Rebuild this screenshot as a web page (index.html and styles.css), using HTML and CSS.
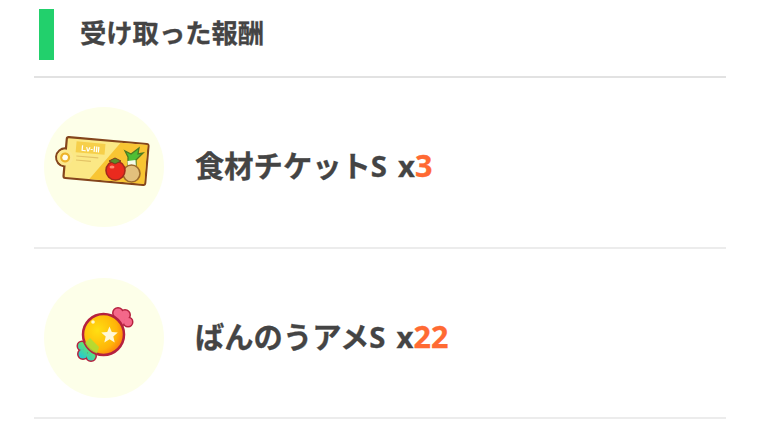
FILE: index.html
```html
<!DOCTYPE html>
<html lang="ja">
<head>
  <meta charset="UTF-8">
  <title>受け取った報酬</title>
  <link rel="stylesheet" href="styles.css">
</head>
<body>
  <div class="title">
    <div class="title-bar"></div>
    <h2>受け取った報酬</h2>
  </div>

  <div class="reward">
    <div class="icon">
      <svg width="120" height="120" viewBox="0 0 120 120">
        <g transform="translate(62 54) rotate(5)">
          <circle cx="-41" cy="0" r="9" fill="#fbe88e" stroke="#84451c" stroke-width="2.2"/>
          <rect x="-41" y="-20.5" width="82" height="41" rx="2" fill="#fbe885" stroke="#84451c" stroke-width="2.2"/>
          <path d="M13 -19.5H40V19.500H-15Z" fill="#f8c533"/>
          <circle cx="-41" cy="0" r="8" fill="#fbe88e"/>
          <circle cx="-41" cy="0" r="5" fill="#edb32a"/>
          <circle cx="-41" cy="0" r="2.8" fill="#fffdf0"/>
          <rect x="-31" y="-17" width="29" height="11" fill="#f6cf4a"/>
          <text class="ticket-label" x="-16.5" y="-8">Lv-III</text>
          <rect x="-30" y="-3" width="22" height="1.2" fill="#e3c265"/>
          <rect x="-30" y="1" width="15" height="1.2" fill="#e3c265"/>
        </g>
        <path d="M84 58 L84 50 L81 44 L87 47 L95 41 L94 47 L99 46 L92 53 L92 60Z" fill="#4fbe35" stroke="#4d7a22" stroke-width="1.3"/>
        <path d="M83.500 54 L91.500 53 L92 61 L84 61Z" fill="#f6fcea"/>
        <circle cx="87.500" cy="66.500" r="8.500" fill="#e3c07c" stroke="#9c6a2c" stroke-width="1.6"/>
        <circle cx="71.500" cy="63.500" r="9.500" fill="#ea2a1e" stroke="#a32a1c" stroke-width="1.6"/>
        <path d="M65 54 L71 51 L77 54 L71 57Z" fill="#5a8f2a" stroke="#7a3a1c" stroke-width="1"/>
        <ellipse cx="68" cy="60" rx="2.500" ry="1.500" fill="#ff8a70"/>
      </svg>
    </div>
    <div class="name">食材チケットS <span class="times">x</span><span class="count">3</span></div>
  </div>

  <div class="reward">
    <div class="icon">
      <svg width="120" height="120" viewBox="0 0 120 120">
        <defs>
          <radialGradient id="candyBody" cx="0.35" cy="0.4" r="0.8">
            <stop offset="0" stop-color="#ffdf12"/>
            <stop offset="0.6" stop-color="#ffb508"/>
            <stop offset="1" stop-color="#fa5a14"/>
          </radialGradient>
          <linearGradient id="candyTail" gradientUnits="userSpaceOnUse" x1="36" y1="80" x2="50" y2="64">
            <stop offset="0" stop-color="#1fc8d8"/>
            <stop offset="1" stop-color="#86f03c"/>
          </linearGradient>
        </defs>
        <g fill="#b5213f" stroke="#b5213f" stroke-width="3">
          <circle cx="74" cy="35" r="4.500"/>
          <circle cx="81" cy="37" r="4.500"/>
          <circle cx="84" cy="44" r="4"/>
          <circle cx="75" cy="42" r="6"/>
          <circle cx="38" cy="68" r="4"/>
          <circle cx="39" cy="76" r="4.500"/>
          <circle cx="47" cy="78" r="4.500"/>
          <circle cx="45" cy="69" r="6"/>
        </g>
        <g fill="#f4688a">
          <circle cx="74" cy="35" r="4.500"/>
          <circle cx="81" cy="37" r="4.500"/>
          <circle cx="84" cy="44" r="4"/>
          <circle cx="75" cy="42" r="6"/>
        </g>
        <g fill="url(#candyTail)">
          <circle cx="38" cy="68" r="4"/>
          <circle cx="39" cy="76" r="4.500"/>
          <circle cx="47" cy="78" r="4.500"/>
          <circle cx="45" cy="69" r="6"/>
        </g>
        <circle cx="59.500" cy="56.500" r="20.500" fill="url(#candyBody)" stroke="#b5213f" stroke-width="2.500"/>
        <path d="M41 65 A20 20 0 0 0 53 75.500 L55 69 L46 60Z" fill="#a5e03a" opacity="0.8"/>
        <path d="M65.500 48.500 L67.800 54 L73.800 54.600 L69.300 58.500 L70.700 64.500 L65.500 61.300 L60.300 64.500 L61.700 58.500 L57.200 54.600 L63.200 54Z" fill="#fff8d8"/>
        <circle cx="49" cy="44" r="1.800" fill="#fff9c8"/>
      </svg>
    </div>
    <div class="name">ばんのうアメS <span class="times">x</span><span class="count">22</span></div>
  </div>
</body>
</html>
```

FILE: styles.css
```css
body {
  margin: 0;
  padding: 0 34px;
  background-color: #ffffff;
  font-family: "Noto Sans", "Noto Sans CJK JP", sans-serif;
  color: #444444;
}

.title {
  display: flex;
  align-items: center;
  height: 76px;
  padding: 0 5px;
  border-bottom: 2px solid #e2e2e2;
}

.title-bar {
  width: 15px;
  height: 51px;
  margin-right: 26px;
  margin-bottom: 8px;
  background-color: #22d06c;
}

.title h2 {
  margin: 0 0 13px 0;
  font-size: 26.300px;
  font-weight: 700;
  -webkit-text-stroke: 0.3px #444444;
}

.reward {
  display: flex;
  align-items: center;
  box-sizing: border-box;
  height: 170.500px;
  padding-top: 10px;
  border-bottom: 2px solid #ececec;
}

.icon {
  width: 120px;
  height: 120px;
  margin-left: 10px;
  margin-right: 31px;
  border-radius: 50%;
  background-color: #fdffe9;
}

.icon svg {
  display: block;
  filter: blur(0.4px);
}

.ticket-label {
  font-family: "Liberation Sans", sans-serif;
  font-size: 8px;
  font-weight: 700;
  fill: #ffffff;
  text-anchor: middle;
}

.name {
  margin-bottom: 5px;
  font-size: 29.300px;
  font-weight: 700;
  white-space: nowrap;
  -webkit-text-stroke: 0.3px #444444;
}

.times {
  margin-left: 3.500px;
}

.count {
  font-size: 30.500px;
  color: #ff6a33;
  -webkit-text-stroke: 0.3px #ff6a33;
}
```
